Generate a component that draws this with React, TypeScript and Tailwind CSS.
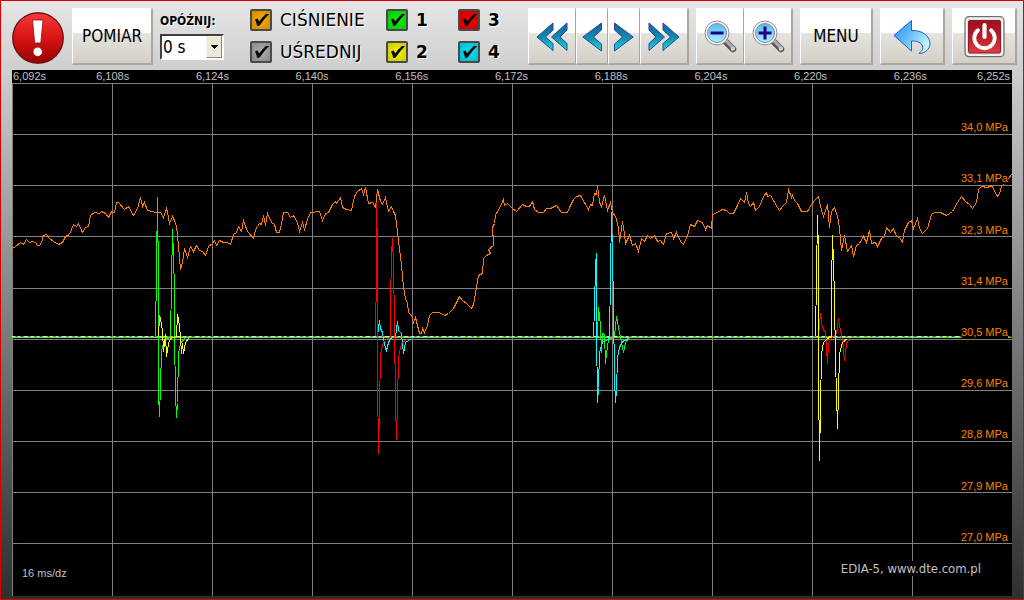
import { useState, type ReactNode } from "react";
import clsx from "clsx";

const TIMES = ["6,092s", "6,108s", "6,124s", "6,140s", "6,156s", "6,172s", "6,188s", "6,204s", "6,220s", "6,236s", "6,252s"];
const PRESSURES = ["34,0", "33,1", "32,3", "31,4", "30,5", "29,6", "28,8", "27,9", "27,0"];

const GRID_X = [12, 112, 212, 312, 412, 512, 612, 712, 812, 912];
const GRID_Y = [83, 134, 185, 236, 288, 339, 390, 441, 492, 543];

const PRESSURE_TRACE = `12,248 15,246 20,242 23,244 26,239 29,242 32,241 35,242 37,245 39,245 41,242 43,235 46,234 49,238 53,241 58,244
  62,242 65,236 69,234 73,224 76,226 78,223 82,232 85,227 88,226 90,215 94,212 99,213 101,211 105,213 108,217 111,211 114,212
  116,202 118,202 124,209 128,206 133,215 137,208 140,197 142,206 144,202 147,210 156,212 160,212 163,217 166,208 167,212
  169,223 172,216 174,220 176,226 178,245 180,269 182,262 184,248 187,257 190,246 193,251 196,245 199,250 202,251 205,255
  208,246 212,243 214,240 216,245 219,240 223,242 227,242 230,244 233,234 236,232 238,226 241,231 243,220 247,231 253,238
  255,229 259,223 261,224 263,215 265,225 267,213 271,222 274,224 276,232 279,232 281,223 283,212 287,212 290,217 293,215
  297,222 299,231 302,222 304,229 307,219 310,212 319,211 322,220 325,213 328,212 332,204 335,201 336,203 340,197 342,207
  346,209 351,210 354,196 357,191 361,188 363,194 365,187 368,203 372,202 375,207 377,189 380,201 382,204 385,197 388,211
  391,206 393,211 395,215 397,232 399,248 401,265 403,287 405,298 407,303 408,312 411,315 413,322 415,317 419,333 421,333
  422,328 424,332 427,325 429,315 432,312 438,312 441,313 444,315 448,313 453,308 457,300 459,296 462,300 466,303 471,308
  473,304 475,293 476,286 478,275 482,273 483,258 486,255 490,253 488,249 493,245 493,237 492,233 492,227 494,223 495,214
  498,210 503,199 504,205 507,203 512,208 516,211 522,204 526,206 529,206 532,201 534,209 538,212 543,212 546,208 550,208
  556,205 561,212 567,212 569,207 573,199 576,196 580,195 584,202 588,209 590,204 592,205 594,193 596,194 597,185 599,202
  601,206 604,195 607,210 610,202 612,212 615,216 618,227 619,242 621,228 622,221 624,233 625,243 629,235 632,245 635,243
  638,251 641,238 644,241 647,235 650,238 654,235 657,241 660,240 663,244 666,233 671,232 673,238 676,232 680,241 683,244
  687,235 690,224 694,226 697,220 702,222 705,229 707,225 711,228 712,214 717,212 722,209 726,210 729,213 733,213 737,205
  740,198 744,202 746,192 748,203 750,206 753,202 755,210 759,206 763,196 766,192 767,196 770,195 773,200 777,207 779,210
  782,206 786,202 788,189 791,197 792,195 794,200 797,203 801,211 807,211 811,204 814,200 818,196 820,206 823,216 827,204
  829,227 831,211 834,207 836,213 838,220 840,238 841,250 844,235 847,251 851,245 853,256 856,245 859,243 863,236 866,242
  869,230 871,243 875,242 877,246 881,238 884,236 886,227 890,232 893,228 896,236 899,237 902,242 904,230 908,222 911,220
  913,228 917,218 919,228 922,233 927,228 931,214 934,212 940,212 946,215 952,211 957,202 961,196 965,201 969,204 972,208
  976,202 978,189 981,186 987,187 991,185 997,196 999,193 1001,186 1008,178 1011,174`;

// injector pulses, drawn back to front
const PULSES = [
  { stroke: "#00ff00", points: "155,336 156,267 157,197 158,284 158,392 159,416 160,385 161,351 163,342 166,338 170,337 171,283 172,229 173,256 174,290 174,335 175,394 176,417 177,402 178,353 180,343 184,338" },
  { stroke: "#ffff00", points: "158,336 159,315 160,318 162,330 163,351 165,334 166,356 168,343 170,338 176,336 177,314 179,325 180,337 181,353 182,343 183,353 185,342 188,338" },
  { stroke: "#00ffff", points: "377,336 379,320 380,328 382,332 383,338 385,348 386,350 388,342 390,338 395,336 397,321 398,330 401,333 402,343 403,353 405,342 411,338" },
  { stroke: "#ff0000", points: "375,336 376,269 376,202 377,252 377,378 378,453 379,407 380,353 383,342 387,338 390,337 390,304 391,254 392,238 393,265 394,322 395,402 396,439 397,402 398,357 401,343 407,338" },
  { stroke: "#00ff00", points: "597,336 598,307 600,325 601,352 602,333 604,334 605,363 606,353 608,339 614,336 616,316 618,327 620,337 622,347 623,352 625,342 628,338" },
  { stroke: "#00ffff", points: "593,336 594,307 595,265 596,253 596,327 597,402 598,387 599,352 602,342 609,338 610,275 611,212 612,253 613,306 614,378 615,402 616,390 617,357 619,347 622,341 628,338" },
  { stroke: "#ff0000", points: "818,336 820,313 822,328 825,332 826,347 827,363 828,343 831,338 836,333 838,318 840,330 842,340 844,360 846,343 849,338" },
  { stroke: "#ffff00", points: "815,336 816,276 817,215 818,253 818,376 819,460 820,408 821,353 823,342 827,338 831,336 831,286 832,235 833,262 834,298 835,360 836,393 837,428 838,393 839,353 842,342 847,338" },
];

const KEY =
  "flex h-[57px] items-center justify-center border-t border-b-2 border-l border-t-white border-b-[#aca899] border-l-white border-r-[#aca899] bg-linear-to-b from-white from-45% via-[#e5e3df] via-45% to-[#d4d0c8] pt-0.5 text-[17px] text-black active:brightness-95";

function Key({ label, className, children }: { label?: string; className: string; children: ReactNode }) {
  return (
    <button type="button" aria-label={label} className={clsx(KEY, className)}>
      {children}
    </button>
  );
}

function Tick({ label, fill, bold }: { label: string; fill: string; bold?: boolean }) {
  return (
    <label className="flex items-center gap-2">
      <span className="grid">
        <input
          type="checkbox"
          defaultChecked
          className={clsx(
            "peer col-start-1 row-start-1 size-[22px] appearance-none rounded-[2px] border-2 border-[#4a4a4a] bg-radial",
            fill,
          )}
        />
        <svg viewBox="0 0 22 22" className="pointer-events-none col-start-1 row-start-1 size-[22px] opacity-0 peer-checked:opacity-100">
          <path d="M5 10.500 7.500 9.500Q8.500 10.500 9 12.500 12 8.500 16 5H19Q14 10 10 16 8.500 17.500 7 16.500 6.500 13.500 5 10.500Z" fill="#000" />
        </svg>
      </span>
      <span
        className={clsx(
          "font-['DejaVu_Sans'] text-[17px] leading-[22px] [text-shadow:1px_1px_0_#fff]",
          bold && "font-bold",
        )}
      >
        {label}
      </span>
    </label>
  );
}

function AlertIcon() {
  return (
    <svg viewBox="0 0 54 54" className="size-[54px] shrink-0">
      <defs>
        <linearGradient id="alert" x1="0" y1="0" x2="0" y2="1">
          <stop offset="0" stopColor="#f43a3a" />
          <stop offset="0.5" stopColor="#d81414" />
          <stop offset="1" stopColor="#980000" />
        </linearGradient>
      </defs>
      <circle cx="27" cy="26" r="26" fill="#a8a8a8" />
      <circle cx="27" cy="26" r="25.2" fill="url(#alert)" stroke="#6a0808" strokeWidth="1.2" />
      <path d="M21.5 8H32L29.8 31H23.7Z" fill="#fff" stroke="#8c1010" strokeWidth="0.8" />
      <circle cx="26.7" cy="39.8" r="4.7" fill="#fff" stroke="#8c1010" strokeWidth="0.8" />
    </svg>
  );
}

function Chevrons({ double, right }: { double?: boolean; right?: boolean }) {
  return (
    <svg viewBox={double ? "0 0 32 30" : "0 0 20 30"} className={clsx("h-[30px]", double ? "w-8" : "w-5", right && "-scale-x-100")}>
      <defs>
        <linearGradient id="chevron" x1="0" y1="0" x2="0" y2="1">
          <stop offset="0" stopColor="#1a5c9c" />
          <stop offset="0.5" stopColor="#1488b0" />
          <stop offset="1" stopColor="#20d8d8" />
        </linearGradient>
      </defs>
      <g fill="url(#chevron)" stroke="#1c4c9c" strokeWidth="1">
        {double ? (
          <>
            <path d="M17 1 1 15 17 28.500V21.500L9.500 15 17 8Z" />
            <path d="M31 1 15.500 15 31 28.500V21.500L24 15 31 8Z" />
          </>
        ) : (
          <path d="M19.500 1 .8 15 19.500 29V22L11.500 15 19.500 8Z" />
        )}
      </g>
    </svg>
  );
}

function Magnifier({ plus }: { plus?: boolean }) {
  return (
    <svg viewBox="-1 0 34 34" className="size-[34px]">
      <defs>
        <linearGradient id="glass" x1="0" y1="0" x2="0" y2="1">
          <stop offset="0" stopColor="#5cb8f0" />
          <stop offset="1" stopColor="#a8f0fc" />
        </linearGradient>
      </defs>
      <path d="M20.500 20.500 29 29" stroke="#555" strokeWidth="6.500" strokeLinecap="round" />
      <path d="M21 19.800 29.300 28.100" stroke="#a8a8a8" strokeWidth="3.500" strokeLinecap="round" />
      <circle cx="28.800" cy="28.800" r="2" fill="#d8d8d8" />
      <circle cx="13" cy="13" r="12" fill="#f6f6f6" stroke="#909090" />
      <circle cx="13" cy="13" r="9.500" fill="url(#glass)" stroke="#7c8ca0" />
      <path d={plus ? "M6.500 13H19.500M13 6.500V19.500" : "M6.500 13H19.500"} stroke="#200080" strokeWidth="3" />
    </svg>
  );
}

function BackIcon() {
  return (
    <svg viewBox="0 0 38 36" className="h-9 w-[38px]">
      <defs>
        <linearGradient id="back" x1="0" y1="0" x2="1" y2="0.6">
          <stop offset="0" stopColor="#1c8cf0" />
          <stop offset="0.500" stopColor="#64bcf8" />
          <stop offset="1" stopColor="#c4f4fc" />
        </linearGradient>
      </defs>
      <path
        d="M1 16.500 18.500 1.500V11.500C29 11 37 17 37 24.500 37 30 32 34.500 26 34.500 29.500 31.500 31 29 29 26 27 22.500 23 22 18.500 22V32Z"
        fill="url(#back)"
        stroke="#2060c0"
        strokeLinejoin="round"
      />
    </svg>
  );
}

function PowerIcon() {
  return (
    <svg viewBox="-1 0 42 42" className="size-[42px]">
      <defs>
        <linearGradient id="power" x1="0" y1="0" x2="0" y2="1">
          <stop offset="0" stopColor="#a01020" />
          <stop offset="0.500" stopColor="#b81c28" />
          <stop offset="1" stopColor="#e43c40" />
        </linearGradient>
      </defs>
      <rect x="1" y="0.700" width="39" height="40" rx="4" fill="#dcdcdc" stroke="#707070" strokeWidth="1.200" />
      <rect x="2.500" y="2.200" width="36" height="37" rx="3" fill="none" stroke="#fff" />
      <rect x="4.500" y="4.500" width="32" height="32.500" rx="1.500" fill="url(#power)" stroke="#8a2028" />
      <path d="M14 14.200A10.200 10.200 0 1 0 27 14.200" fill="none" stroke="#fff" strokeWidth="3.800" strokeLinecap="round" />
      <path d="M20.500 9V21" stroke="#fff" strokeWidth="4.200" strokeLinecap="round" />
    </svg>
  );
}

function Plot() {
  return (
    <svg viewBox="12 83 1000 513" preserveAspectRatio="none" shapeRendering="crispEdges" className="absolute inset-0 size-full">
      <g transform="translate(.5 .5)" fill="none">
        <g stroke="#808080">
          {GRID_X.map((x) => (
            <path key={x} d={`M${x} 82V596`} />
          ))}
          {GRID_Y.map((y) => (
            <path key={y} d={`M11 ${y}H1012`} />
          ))}
        </g>
        <polyline points={PRESSURE_TRACE} stroke="#ff8000" />
        {/* idle level of the four channels */}
        <g shapeRendering="auto">
          <path d="M11 336H1011" stroke="#ff0000" />
          <path d="M11 336H1011" stroke="#ffff00" strokeDasharray="4 2 3 3 5 2" />
          <path d="M11 337H1011" stroke="#00ff00" />
          <path d="M11 337H1011" stroke="#00ffff" strokeDasharray="23 2 11 3" />
        </g>
        {PULSES.map((pulse) => (
          <polyline key={pulse.points} points={pulse.points} stroke={pulse.stroke} />
        ))}
      </g>
    </svg>
  );
}

export default function App() {
  const [delay, setDelay] = useState("0");

  return (
    <div className="flex min-h-screen flex-col border border-[#d80000] bg-linear-to-b from-[#e6e6e6] to-[#2f2f2f] font-['DejaVu_Sans_Condensed','DejaVu_Sans',sans-serif] text-black">
      <header className="flex items-start gap-[7px] pt-[7px] pr-1.5 pb-1 pl-[10px]">
        <div className="pt-1">
          <AlertIcon />
        </div>
        <Key className="w-[81px] border-r-2">POMIAR</Key>

        <div className="flex w-16 flex-col gap-1 pt-1">
          <label htmlFor="delay" className="text-xs leading-[18px] font-bold whitespace-nowrap [text-shadow:1px_1px_0_#fff]">
            OPÓŹNIJ:
          </label>
          <div className="relative">
            <select
              id="delay"
              value={delay}
              onChange={(e) => setDelay(e.target.value)}
              className="block h-[26px] w-16 appearance-none border-2 border-t-[#404040] border-r-white border-b-white border-l-[#404040] bg-white pl-px text-[17px] leading-[22px]"
            >
              <option value="0">0 s</option>
              <option value="1">1 s</option>
              <option value="2">2 s</option>
            </select>
            <span className="pointer-events-none absolute top-0.5 right-0.5 flex h-[22px] w-4 items-center justify-center border border-t-[#f4f2e8] border-r-[#8c8878] border-b-[#8c8878] border-l-[#f4f2e8] bg-[#ece9d8]">
              <svg viewBox="0 0 7 4" className="h-1 w-[7px]" shapeRendering="crispEdges">
                <path d="M0 0H7L3.500 4Z" />
              </svg>
            </span>
          </div>
        </div>

        <div className="ml-[19px] grid flex-1 grid-cols-[136px_72px_auto] gap-y-2.5 pt-px">
          <Tick label="CIŚNIENIE" fill="from-[#f4b000] to-[#d08800]" />
          <Tick label="1" fill="from-[#10f010] to-[#08c808]" bold />
          <Tick label="3" fill="from-[#f80000] to-[#c80000]" bold />
          <Tick label="UŚREDNIJ" fill="from-[#b0b0b0] to-[#888888]" />
          <Tick label="2" fill="from-[#f4f400] to-[#c8c800]" bold />
          <Tick label="4" fill="from-[#08e4f4] to-[#08b8cc]" bold />
        </div>

        <div className="flex">
          <Key label="Początek" className="w-12 border-r">
            <Chevrons double />
          </Key>
          <Key label="Wstecz" className="w-8 border-r">
            <Chevrons />
          </Key>
          <Key label="Dalej" className="w-8 border-r">
            <Chevrons right />
          </Key>
          <Key label="Koniec" className="w-[49px] border-r-2">
            <Chevrons double right />
          </Key>
        </div>
        <div className="flex">
          <Key label="Pomniejsz" className="w-12 border-r">
            <Magnifier />
          </Key>
          <Key label="Powiększ" className="w-[49px] border-r-2">
            <Magnifier plus />
          </Key>
        </div>
        <Key className="w-[73px] border-r-2">MENU</Key>
        <Key label="Powrót" className="w-[65px] border-r-2">
          <BackIcon />
        </Key>
        <Key label="Wyłącz" className="w-[65px] border-r-2">
          <PowerIcon />
        </Key>
      </header>

      <main className="mx-[11px] mb-[3px] flex flex-1 flex-col bg-black font-['Liberation_Sans',sans-serif] text-[11px] leading-[13px]">
        <div className="flex text-[#c0c0c0]">
          {TIMES.map((time) => (
            <span key={time} className="flex-[2] text-center first:flex-1 first:pl-px first:text-left last:flex-1 last:pr-0.5 last:text-right">
              {time}
            </span>
          ))}
        </div>
        <div className="relative flex-1">
          <Plot />
          <div className="absolute -top-px right-1 bottom-0.5 grid grid-rows-10 text-right leading-[11px] text-[#ff8000]">
            {PRESSURES.map((value) => (
              <span key={value} className="self-end bg-black">
                {value} MPa
              </span>
            ))}
          </div>
          <span className="absolute bottom-4 left-[10px] bg-black text-[#c0c0c0]">16 ms/dz</span>
          <span className="absolute right-[31px] bottom-5 bg-black font-['DejaVu_Sans_Condensed','DejaVu_Sans',sans-serif] text-[13px] leading-[15px] text-[#c0c0c0]">
            EDIA-5, www.dte.com.pl
          </span>
        </div>
      </main>
    </div>
  );
}
